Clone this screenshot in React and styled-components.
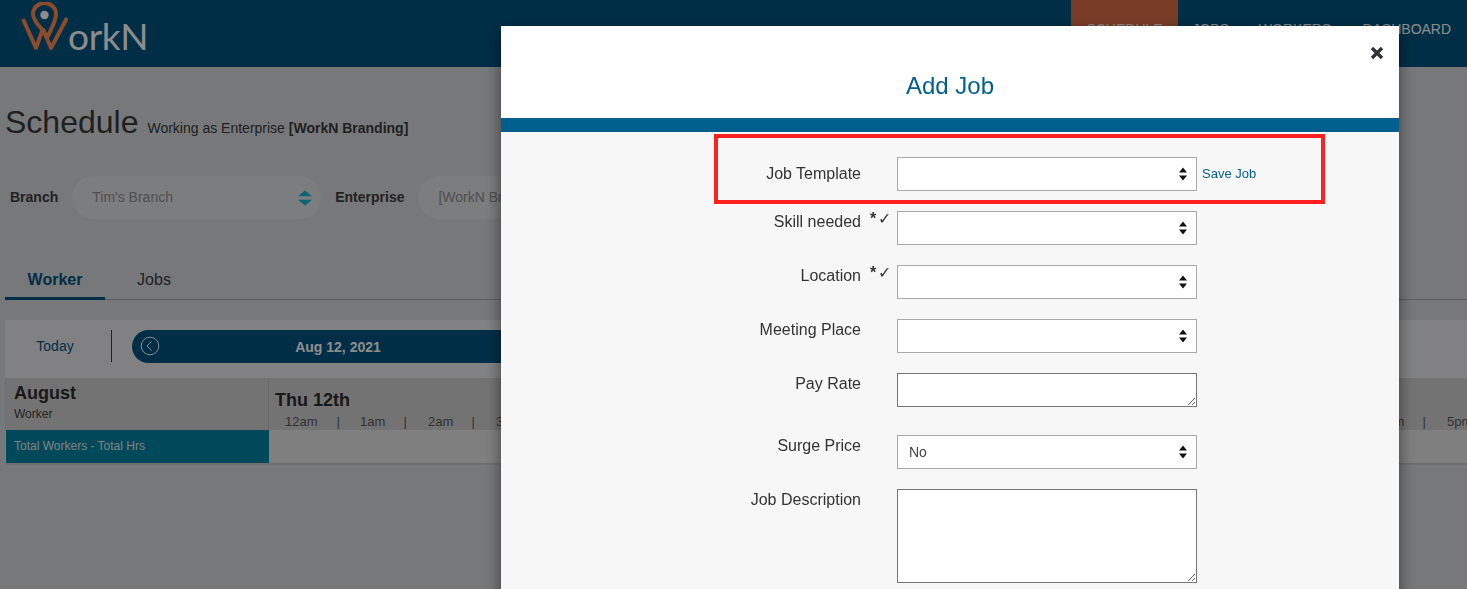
import React from "react";
import styled, { createGlobalStyle } from "styled-components";

const GlobalStyle = createGlobalStyle`
  html, body {
    margin: 0;
    height: 589px;
    overflow: hidden;
    background: #d8dade;
    font-family: "Liberation Sans", Arial, sans-serif;
    color: #3d3d3d;
  }
  * {
    box-sizing: border-box;
  }
`;

const Page = styled.div`
  width: 1467px;
  height: 589px;
  overflow: hidden;
`;

const Header = styled.header`
  display: flex;
  justify-content: space-between;
  height: 67px;
  background: #005580;
`;

const Logo = styled.div`
  display: flex;
  align-items: flex-start;
  margin-left: 21px;
`;

const LogoText = styled.span`
  font-family: Lato, sans-serif;
  font-weight: 400;
  font-size: 37px;
  line-height: 37px;
  letter-spacing: -0.3px;
  margin-top: 17px;
  color: #fff;
`;

const Nav = styled.nav`
  display: flex;
`;

const NavItem = styled.a`
  width: ${(p) => p.$w}px;
  height: 67px;
  padding-top: 21px;
  text-align: center;
  font-size: 14px;
  line-height: 16px;
  white-space: nowrap;
  color: #fff;
  background: ${(p) => (p.$active ? "#dc7048" : "transparent")};
`;

const Main = styled.main`
  padding-left: 5px;
`;

const Title = styled.div`
  display: flex;
  align-items: baseline;
  height: 40px;
  margin-top: 35px;
  font-size: 32px;
  line-height: 40px;
  color: #3a3a3a;
`;

const Subtitle = styled.span`
  margin-left: 9px;
  font-size: 14px;
  b {
    font-weight: bold;
  }
`;

const Filters = styled.div`
  display: flex;
  align-items: center;
  height: 43px;
  margin-top: 34px;
  padding-left: 5px;
  line-height: 41px;
`;

const FilterLabel = styled.span`
  font-size: 14px;
  font-weight: bold;
  margin-right: 14px;
`;

const Pill = styled.div`
  display: flex;
  align-items: center;
  justify-content: space-between;
  width: 249px;
  height: 43px;
  margin-right: 14px;
  padding: 0 9px 0 20px;
  border-radius: 22px;
  background: #e2e3e5;
  font-size: 14px;
  color: #909090;
`;

const Tabs = styled.div`
  display: flex;
  height: 41px;
  margin-top: 40px;
  border-bottom: 1px solid #a9abae;
`;

const Tab = styled.a`
  width: ${(p) => (p.$active ? "100px" : "98px")};
  height: 41px;
  padding-top: 12px;
  text-align: center;
  font-size: 16px;
  line-height: 18px;
  font-weight: ${(p) => (p.$active ? "bold" : "normal")};
  color: ${(p) => (p.$active ? "#005580" : "#3d3d3d")};
  border-bottom: ${(p) => (p.$active ? "3px solid #005580" : "none")};
`;

const Toolbar = styled.div`
  display: flex;
  align-items: flex-start;
  height: 58px;
  margin-top: 20px;
  padding-top: 10px;
  background: #ebecee;
`;

const Today = styled.a`
  width: 107px;
  height: 32px;
  padding-right: 6px;
  text-align: center;
  font-size: 14px;
  line-height: 32px;
  color: #005580;
  border-right: 1px solid #005580;
`;

const DateBar = styled.div`
  position: relative;
  display: flex;
  align-items: center;
  justify-content: center;
  width: 412px;
  height: 33px;
  margin-left: 20px;
  border-radius: 17px 0 0 17px;
  background: #005580;
  font-size: 14px;
  font-weight: bold;
  color: #fff;
`;

const PrevButton = styled.svg`
  position: absolute;
  left: 8px;
  top: 6px;
`;

const Table = styled.div`
  display: grid;
  grid-template-columns: 264px 1fr;
  grid-template-rows: 52px 33px;
  border-bottom: 2px solid #c8c8c8;
  background: #e8e8e8;
`;

const MonthCell = styled.div`
  padding: 5px 0 0 8px;
  background: #d2d2d2;
  border-left: 1px solid #c8c8c8;
  border-right: 1px solid #c4c4c4;
  font-size: 12px;
  strong {
    display: block;
    font-size: 18px;
    line-height: 21px;
    margin-bottom: 3px;
    color: #2c2c2c;
  }
`;

const DayCell = styled.div`
  padding: 12px 0 0 6px;
  background: #d2d2d2;
  overflow: hidden;
  strong {
    display: block;
    font-size: 18px;
    line-height: 20px;
    color: #2c2c2c;
  }
`;

const Hours = styled.div`
  display: flex;
  margin: 4px 0 0 10px;
  width: 1300px;
  font-size: 13px;
  line-height: 16px;
  color: #5a5a5a;
`;

const Hour = styled.div`
  display: flex;
  justify-content: space-between;
  flex: 0 0 ${(p) => (p.$first ? "75px" : "67.95px")};
  padding-right: ${(p) => (p.$first ? 20 : 21)}px;
  white-space: nowrap;
`;

const TotalCell = styled.div`
  padding-left: 8px;
  margin-left: 1px;
  background: #0086a7;
  font-size: 12px;
  line-height: 33px;
  color: #e8e8e8;
`;

const Overlay = styled.div`
  position: fixed;
  inset: 0;
  display: flex;
  justify-content: flex-end;
  align-items: flex-start;
  padding: 26px 68px 0 0;
  background: rgba(0, 0, 0, 0.45);
  overflow: hidden;
`;

const Modal = styled.div`
  position: relative;
  flex: 0 0 898px;
  background: #f7f7f7;
  box-shadow: 0 5px 15px rgba(0, 0, 0, 0.5);
`;

const ModalHead = styled.div`
  height: 106px;
  padding-top: 46px;
  background: #fff;
  border-bottom: 14px solid #005f8c;
  text-align: center;
  font-size: 24px;
  line-height: 28px;
  color: #005f8c;
`;

const Close = styled.svg`
  position: absolute;
  top: 20px;
  right: 15px;
`;

const Form = styled.form`
  padding: 25px 0 40px;
`;

const Row = styled.div`
  display: grid;
  grid-template-columns: 360px 36px 300px auto;
  margin-bottom: ${(p) => p.$gap || 20}px;
`;

const Label = styled.label`
  padding-top: ${(p) => p.$top || 2}px;
  text-align: right;
  font-size: 16px;
  line-height: 18px;
  color: #333;
`;

const Required = styled.span`
  padding-left: 9px;
  font-size: 16px;
  line-height: 16px;
  letter-spacing: 2px;
  white-space: nowrap;
  color: #333;
  b {
    font-weight: bold;
  }
`;

const Select = styled.div`
  display: flex;
  align-items: center;
  justify-content: space-between;
  height: 34px;
  padding: 0 9px 0 11px;
  background: #fff;
  border: 1px solid #aaa;
  font-size: 14px;
  color: #444;
`;

const TextArea = styled.textarea`
  display: block;
  width: 300px;
  height: ${(p) => p.$h}px;
  margin: 0;
  background: #fff;
  border: 1px solid #767676;
`;

const SaveLink = styled.a`
  padding: 10px 0 0 5px;
  font-size: 13px;
  line-height: 14px;
  color: #005f8c;
`;

const Highlight = styled.div`
  position: absolute;
  left: 213px;
  top: 108px;
  width: 611px;
  height: 70px;
  border: 4px solid #ff2020;
  pointer-events: none;
`;

const UpDown = ({ color = "#111", w = 8, h = 14 }) => (
  <svg width={w} height={h} viewBox="0 0 8 14" preserveAspectRatio="none">
    <path d="M4 0.5 L8 5.5 H0 Z M0 8.5 H8 L4 13.5 Z" fill={color} />
  </svg>
);

const WorknMark = () => (
  <svg width="47" height="50" viewBox="21 2 47 50" style={{ marginTop: 2 }}>
    <path
      d="M23 19 L36 48 L42.5 30 M42.5 30 C37 24 33 19 33 14 A11.5 11 0 0 1 56 14 C56 21 52 27 47.5 37 M43 29 L51 48 L67 18"
      fill="none"
      stroke="#ff8a50"
      strokeWidth="4"
      strokeLinejoin="round"
    />
    <circle cx="44.5" cy="15" r="4.2" fill="#fff" />
  </svg>
);

const hours = ["12am", "1am", "2am", "3am", "4am", "5am", "6am", "7am", "8am", "9am", "10am", "11am", "12pm", "1pm", "2pm", "3pm", "4pm", "5pm"];

export default function App() {
  return (
    <Page>
      <GlobalStyle />
      <Header>
        <Logo>
          <WorknMark />
          <LogoText>orkN</LogoText>
        </Logo>
        <Nav>
          <NavItem $active $w={107}>SCHEDULE</NavItem>
          <NavItem $w={65.5}>JOBS</NavItem>
          <NavItem $w={103}>WORKERS</NavItem>
          <NavItem $w={120.5}>DASHBOARD</NavItem>
        </Nav>
      </Header>

      <Main>
        <Title>
          Schedule
          <Subtitle>
            Working as Enterprise <b>[WorkN Branding]</b>
          </Subtitle>
        </Title>

        <Filters>
          <FilterLabel>Branch</FilterLabel>
          <Pill>
            Tim's Branch
            <UpDown color="#17b6cf" w={14} h={16} />
          </Pill>
          <FilterLabel>Enterprise</FilterLabel>
          <Pill>[WorkN Branding]</Pill>
        </Filters>

        <Tabs>
          <Tab $active>Worker</Tab>
          <Tab>Jobs</Tab>
        </Tabs>

        <Toolbar>
          <Today>Today</Today>
          <DateBar>
            <PrevButton width="20" height="20" viewBox="0 0 20 20">
              <circle cx="10" cy="10" r="8.8" fill="none" stroke="#fff" strokeWidth="1" />
              <path d="M11.5 5.5 L7 10 L11.5 14.5" fill="none" stroke="#fff" strokeWidth="1" />
            </PrevButton>
            Aug 12, 2021
          </DateBar>
        </Toolbar>

        <Table>
          <MonthCell>
            <strong>August</strong>
            Worker
          </MonthCell>
          <DayCell>
            <strong>Thu 12th</strong>
            <Hours>
              {hours.map((h, i) => (
                <Hour key={h} $first={i === 0}>
                  <span>{h}</span>
                  <span>|</span>
                </Hour>
              ))}
            </Hours>
          </DayCell>
          <TotalCell>Total Workers - Total Hrs</TotalCell>
          <div />
        </Table>
      </Main>

      <Overlay>
        <Modal>
          <ModalHead>Add Job</ModalHead>
          <Close width="14" height="14" viewBox="0 0 14 14">
            <path d="M2 2 L12 12 M12 2 L2 12" stroke="#2e3338" strokeWidth="3.4" />
          </Close>
          <Form>
            <Row>
              <Label $top={8}>Job Template</Label>
              <span />
              <Select>
                <span />
                <UpDown />
              </Select>
              <SaveLink>Save Job</SaveLink>
            </Row>
            <Row>
              <Label>Skill needed</Label>
              <Required><b>*</b>✓</Required>
              <Select>
                <span />
                <UpDown />
              </Select>
            </Row>
            <Row>
              <Label>Location</Label>
              <Required><b>*</b>✓</Required>
              <Select>
                <span />
                <UpDown />
              </Select>
            </Row>
            <Row>
              <Label>Meeting Place</Label>
              <span />
              <Select>
                <span />
                <UpDown />
              </Select>
            </Row>
            <Row $gap={28}>
              <Label>Pay Rate</Label>
              <span />
              <TextArea $h={34} />
            </Row>
            <Row>
              <Label>Surge Price</Label>
              <span />
              <Select>
                No
                <UpDown />
              </Select>
            </Row>
            <Row>
              <Label>Job Description</Label>
              <span />
              <TextArea $h={94} />
            </Row>
          </Form>
          <Highlight />
        </Modal>
      </Overlay>
    </Page>
  );
}
